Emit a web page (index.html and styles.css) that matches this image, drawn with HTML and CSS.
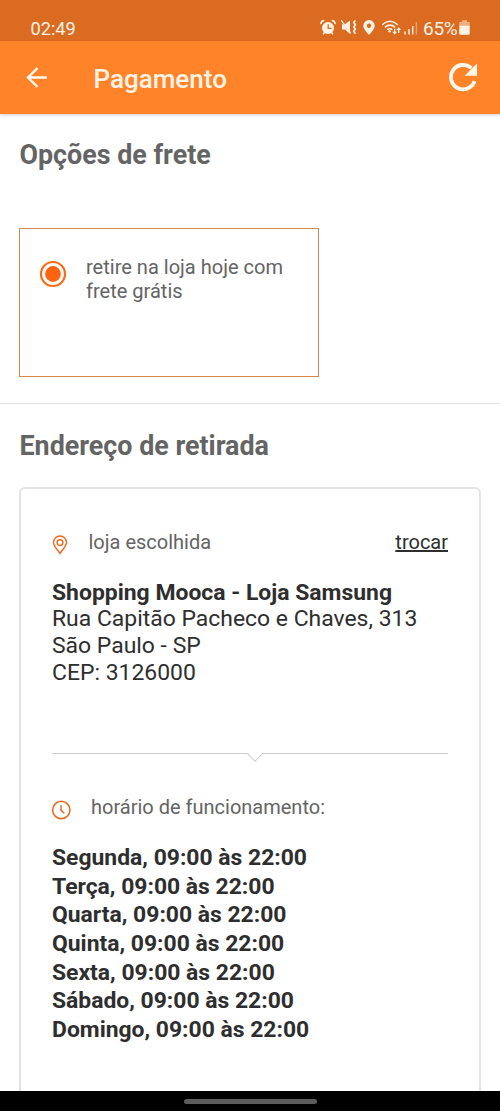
FILE: index.html
```html
<!DOCTYPE html>
<html lang="pt-BR">
<head>
<meta charset="utf-8">
<title>Pagamento</title>
<link rel="stylesheet" href="styles.css">
</head>
<body>
<div class="screen">
  <div class="status">
    <span class="clock">02:49</span>
    <svg class="status-icons" width="99" height="20" viewBox="319 18 99 20" fill="#fff3e6">
      <circle cx="328" cy="28" r="6"/>
      <path d="M321 24.200a3 3 0 0 1 3.200-3.600M335 24.200a3 3 0 0 0-3.200-3.600M324.500 32.500l-1.500 1.800M331.500 32.500l1.500 1.800" fill="none" stroke="#fff3e6" stroke-width="1.600"/>
      <path d="M328.200 24.200v4.200h3.300" fill="none" stroke="#db6b21" stroke-width="1.300"/>
      <path d="M342 24.300h3l5-3.800v13.500l-5-4.500h-3z"/>
      <path d="M341.500 21.500l9 11.500" stroke="#db6b21" stroke-width=".8"/>
      <path d="M341.300 20.300l9.500 13" stroke="#fff3e6" stroke-width="1.200"/>
      <path d="M355.300 20.500l-1.500 2 1.500 2.200-1.500 2.200 1.500 2.200-1.500 2.200 1.500 2.500" fill="none" stroke="#fff3e6" stroke-width="1.700"/>
      <path fill-rule="evenodd" d="M369 20a5.700 5.700 0 0 0-5.700 5.700c0 3.800 5.700 9 5.700 9s5.700-5.200 5.700-9a5.700 5.700 0 0 0-5.700-5.700zm0 3.500a2.200 2.200 0 1 1 0 4.400 2.200 2.200 0 0 1 0-4.400z"/>
      <path d="M382.200 24.700q7.800-7 15.600 0M384.800 27.400q5.200-4.500 10.400 0M387.300 29.700q2.700-2 5 0" fill="none" stroke="#fff3e6" stroke-width="1.500"/>
      <circle cx="389.500" cy="31.300" r="1.200"/>
      <path d="M394 28.800v3h-1.800l2.500 2.700 2.500-2.700h-1.800v-3zM398 33v-3h-1.600l2.300-2.700 2.300 2.700h-1.600v3z"/>
      <path d="M404.300 31.500h1.400v3h-1.400zM408.300 29h1.400v5.500h-1.400zM412 26h1.400v8.500h-1.400z"/>
      <path d="M415.700 22h1.400v12.500h-1.400z" opacity=".4"/>
    </svg>
    <span class="percent">65%</span>
    <svg class="battery" width="11" height="15" viewBox="0 0 11 15" fill="#fff3e6">
      <path d="M3 .3h5v1.700h2.200q.5 0 .5.500V5.500H.3V2.500q0-.500.500-.500H3z" opacity=".5"/>
      <path d="M.3 5.500h10.400v8.200q0 1-1 1H1.300q-1 0-1-1z"/>
    </svg>
  </div>
  <header class="appbar">
    <svg width="21" height="21" viewBox="0 0 21 21" fill="none" stroke="#fff8ef" stroke-width="2.400"><path d="M20.800 10.500H1.900M11.500 1.200L2 10.500l9.500 9.300"/></svg>
    <h1 class="title">Pagamento</h1>
    <svg class="reload" width="30" height="30" viewBox="0 0 30 30"><path d="M26.600 19.200A12.200 12.200 0 1 1 23.400 6.200" fill="none" stroke="#fff8ef" stroke-width="3.800"/><path d="M29 1.500v12.300H16.700z" fill="#fff8ef"/></svg>
  </header>
  <main class="content">
    <section class="shipping">
      <h2 class="heading">Opções de frete</h2>
      <label class="option">
        <svg width="28" height="28" viewBox="0 0 28 28"><circle cx="14" cy="14" r="12" fill="none" stroke="#f96d16" stroke-width="2.200"/><circle cx="14" cy="14" r="7.900" fill="#ff6510"/></svg>
        <span class="option-text">retire na loja hoje com<br>frete grátis</span>
      </label>
    </section>
    <section class="pickup">
      <h2 class="heading">Endereço de retirada</h2>
      <div class="card">
        <div class="row">
          <svg class="pin" width="16" height="20" viewBox="0 0 16 20" fill="none" stroke="#ec671c" stroke-width="1.400"><path d="M8 18.500C5.500 14.500 1.500 11 1.500 7.500a6.500 6.500 0 0 1 13 0C14.500 11 10.500 14.500 8 18.500z"/><circle cx="8" cy="7.600" r="2.900"/></svg>
          <span class="label">loja escolhida</span>
          <a class="change">trocar</a>
        </div>
        <div class="address"><strong>Shopping Mooca - Loja Samsung</strong><br>Rua Capitão Pacheco e Chaves, 313<br>São Paulo - SP<br>CEP: 3126000</div>
        <div class="divider"><span class="line left"></span><svg width="16" height="10" viewBox="0 0 16 10" fill="none" stroke="#cfcfcf" stroke-width="1.100"><path d="M0 .5h.5L8 8.300 15.500.5h.5"/></svg><span class="line right"></span></div>
        <div class="row hours-row">
          <svg class="watch" width="20" height="20" viewBox="0 0 20 20" fill="none" stroke="#ec671c" stroke-width="1.500"><circle cx="10.300" cy="10" r="8.700"/><path d="M10 5.300v5l3.300 3"/></svg>
          <span class="label">horário de funcionamento:</span>
        </div>
        <div class="hours">
          <div>Segunda, 09:00 às 22:00</div>
          <div>Terça, 09:00 às 22:00</div>
          <div>Quarta, 09:00 às 22:00</div>
          <div>Quinta, 09:00 às 22:00</div>
          <div>Sexta, 09:00 às 22:00</div>
          <div>Sábado, 09:00 às 22:00</div>
          <div>Domingo, 09:00 às 22:00</div>
        </div>
      </div>
    </section>
  </main>
  <div class="navbar"><span class="handle"></span></div>
</div>
</body>
</html>
```
FILE: styles.css
```css
* { box-sizing: border-box; }
body { margin: 0; font-family: Roboto, sans-serif; color: #2e2e2e; background: #fff; }
svg { display: block; flex: none; }
.screen { width: 500px; height: 1111px; display: flex; flex-direction: column; overflow: hidden; }
.status { flex: none; height: 41px; background: #db6b21; display: flex; align-items: flex-start; padding: 18px 30px 0 30.5px; color: #fff3e6; font-size: 19px; line-height: 21px; }
.clock { font-size: 18.200px; }
.status-icons { margin-left: auto; }
.percent { margin-left: 5px; width: 34px; letter-spacing: -.3px; }
.battery { margin: 2px 0 0 2px; }
.appbar { flex: none; height: 73px; background: #ff8429; display: flex; align-items: center; padding: 0 22px 0 26px; box-shadow: 0 1px 3px rgba(0,0,0,.2); }
.title { margin: 3px 0 0 46.500px; font-size: 26px; line-height: 30px; font-weight: 500; color: #fff3e6; }
.reload { margin-left: auto; margin-top: -1px; }
.content { flex: 1; min-height: 0; overflow: hidden; }
.heading { margin: 0; font-size: 26.850px; line-height: 32px; font-weight: 700; color: #646464; }
.shipping { height: 290px; padding: 25px 19.500px 0; border-bottom: 1px solid #e4e4e4; }
.option { width: 300px; height: 149px; margin-top: 57px; margin-left: -.5px; border: 1px solid #d5874f; display: flex; padding: 31px 0 0 19px; }
.option-text { margin: -5.500px 0 0 19px; font-size: 20.050px; line-height: 24px; color: #646464; }
.pickup { padding: 26px 19px 0; }
.pickup .heading { margin-left: .5px; }
.card { margin-top: 25px; height: 700px; border: 2px solid #e4e4e4; border-radius: 6px; padding: 41px 31px 0; }
.row { display: flex; line-height: 24px; font-size: 20px; color: #646464; }
.pin { margin-top: 5px; }
.label { margin-left: 20.500px; }
.change { margin-left: auto; color: #2e2e2e; text-decoration: underline; }
.address { margin-top: 24.700px; font-size: 22.930px; line-height: 26.800px; }
.divider { margin-top: 66.100px; display: flex; }
.line { height: 1px; background: #cfcfcf; flex: none; }
.left { width: 195px; }
.right { flex: 1; }
.hours-row { margin-top: 32px; }
.watch { margin: 5px 0 0 -1px; }
.hours-row .label { margin-left: 20px; }
.hours { margin-top: 24px; font-size: 22.900px; line-height: 28.700px; font-weight: 700; }
.navbar { flex: none; height: 20px; background: #000; display: flex; justify-content: center; padding-top: 8px; }
.handle { width: 133px; height: 5px; border-radius: 3px; background: #5c5c5c; }
```
